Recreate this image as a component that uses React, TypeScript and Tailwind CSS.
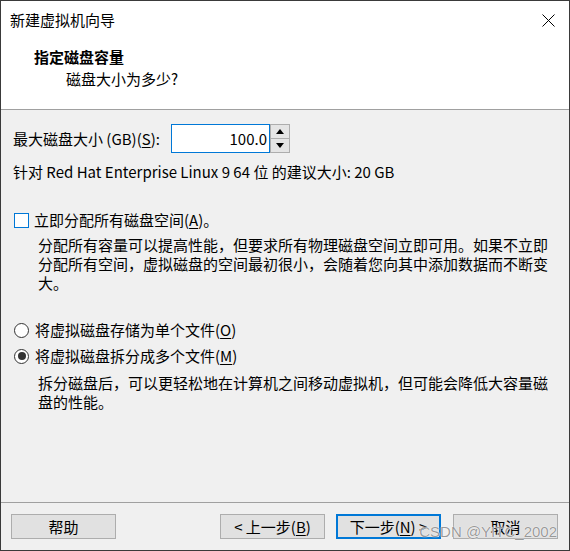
import React from "react";

const font = '"Noto Sans CJK SC", "Noto Sans", sans-serif';

function U({ c }: { c: string }) {
  return <span className="underline underline-offset-2">{c}</span>;
}

function Btn({ children, def }: { children: React.ReactNode; def?: boolean }) {
  return (
    <div
      className={
        "w-[105px] h-[25px] flex items-center justify-center bg-[#e1e1e1] text-[15px] leading-[20px] text-black " +
        (def ? "border-2 border-[#0078d7]" : "border border-[#adadad]")
      }
    >
      {children}
    </div>
  );
}

export default function App() {
  return (
    <div
      className="relative w-[570px] h-[551px] border border-[#3a3a3a] bg-[#f0f0f0] flex flex-col text-black text-[15px] overflow-hidden"
      style={{ fontFamily: font }}
    >
      {/* header */}
      <div className="h-[109px] bg-white border-b border-[#a0a0a0] flex flex-col shrink-0">
        <div className="h-[38px] flex items-center justify-between pl-[9px] pr-[14px]">
          <span className="leading-[20px]">新建虚拟机向导</span>
          <svg width="13" height="13" viewBox="0 0 13 13">
            <path d="M0.5 0.5 L12.5 12.5 M12.5 0.5 L0.5 12.5" stroke="#000" strokeWidth="1" />
          </svg>
        </div>
        <div className="mt-[8px] pl-[33px] font-bold leading-[20px]">指定磁盘容量</div>
        <div className="mt-[2px] pl-[65px] leading-[20px]">磁盘大小为多少?</div>
      </div>

      {/* body */}
      <div className="flex-1 flex flex-col pl-[12px] pr-[12px]">
        <div className="mt-[14px] flex items-center">
          <div className="w-[158px] leading-[20px]">
            最大磁盘大小 (GB)(<U c="S" />):
          </div>
          <div className="w-[99px] h-[29px] border border-[#0078d7] bg-white flex items-center justify-end pr-[2px] leading-[20px]">
            100.0
          </div>
          <div className="w-[20px] h-[29px] flex flex-col">
            <div className="flex-1 border border-[#adadad] bg-[#e5e5e5] flex items-center justify-center">
              <svg width="8" height="5" viewBox="0 0 8 5">
                <path d="M4 0 L8 5 L0 5 Z" fill="#000" />
              </svg>
            </div>
            <div className="flex-1 border border-t-0 border-[#adadad] bg-[#e5e5e5] flex items-center justify-center">
              <svg width="8" height="5" viewBox="0 0 8 5">
                <path d="M0 0 L8 0 L4 5 Z" fill="#000" />
              </svg>
            </div>
          </div>
        </div>

        <div className="mt-[9px] leading-[20px]">
          针对 Red Hat Enterprise Linux 9 64 位 的建议大小: 20 GB
        </div>

        <div className="mt-[28px] flex items-center leading-[20px]">
          <div className="w-[15px] h-[15px] border border-[#0078d7] bg-white mr-[5px] ml-[1px]" />
          <span>
            立即分配所有磁盘空间(<U c="A" />)。
          </span>
        </div>

        <div className="mt-[5px] pl-[25px] leading-[19px]">
          分配所有容量可以提高性能，但要求所有物理磁盘空间立即可用。如果不立即
          <br />
          分配所有空间，虚拟磁盘的空间最初很小，会随着您向其中添加数据而不断变
          <br />
          大。
        </div>

        <div className="mt-[28px] flex items-center leading-[20px]">
          <div className="w-[15px] h-[15px] rounded-full border border-[#333] bg-white mr-[6px] ml-[1px]" />
          <span>
            将虚拟磁盘存储为单个文件(<U c="O" />)
          </span>
        </div>

        <div className="mt-[6px] flex items-center leading-[20px]">
          <div className="w-[15px] h-[15px] rounded-full border border-[#333] bg-white mr-[6px] ml-[1px] flex items-center justify-center">
            <div className="w-[8px] h-[8px] rounded-full bg-[#333]" />
          </div>
          <span>
            将虚拟磁盘拆分成多个文件(<U c="M" />)
          </span>
        </div>

        <div className="mt-[7px] pl-[25px] leading-[19px]">
          拆分磁盘后，可以更轻松地在计算机之间移动虚拟机，但可能会降低大容量磁
          <br />
          盘的性能。
        </div>
      </div>

      {/* footer */}
      <div className="h-[48px] border-t border-[#a0a0a0] flex items-start pt-[11px] pl-[10px] pr-[11px] shrink-0">
        <Btn>帮助</Btn>
        <div className="flex-1" />
        <Btn>
          &lt; 上一步(<U c="B" />)
        </Btn>
        <div className="w-[11px]" />
        <Btn def>
          下一步(<U c="N" />) &gt;
        </Btn>
        <div className="w-[12px]" />
        <Btn>取消</Btn>
      </div>

      <div
        className="absolute right-[12px] bottom-[9px] text-[15px] leading-[18px] text-[rgba(120,120,120,0.75)]"
        style={{ fontFamily: '"Liberation Sans", sans-serif', textShadow: "0 0 1px #fff, 0 0 1px #fff" }}
      >
        CSDN @YITC_2002
      </div>
    </div>
  );
}
